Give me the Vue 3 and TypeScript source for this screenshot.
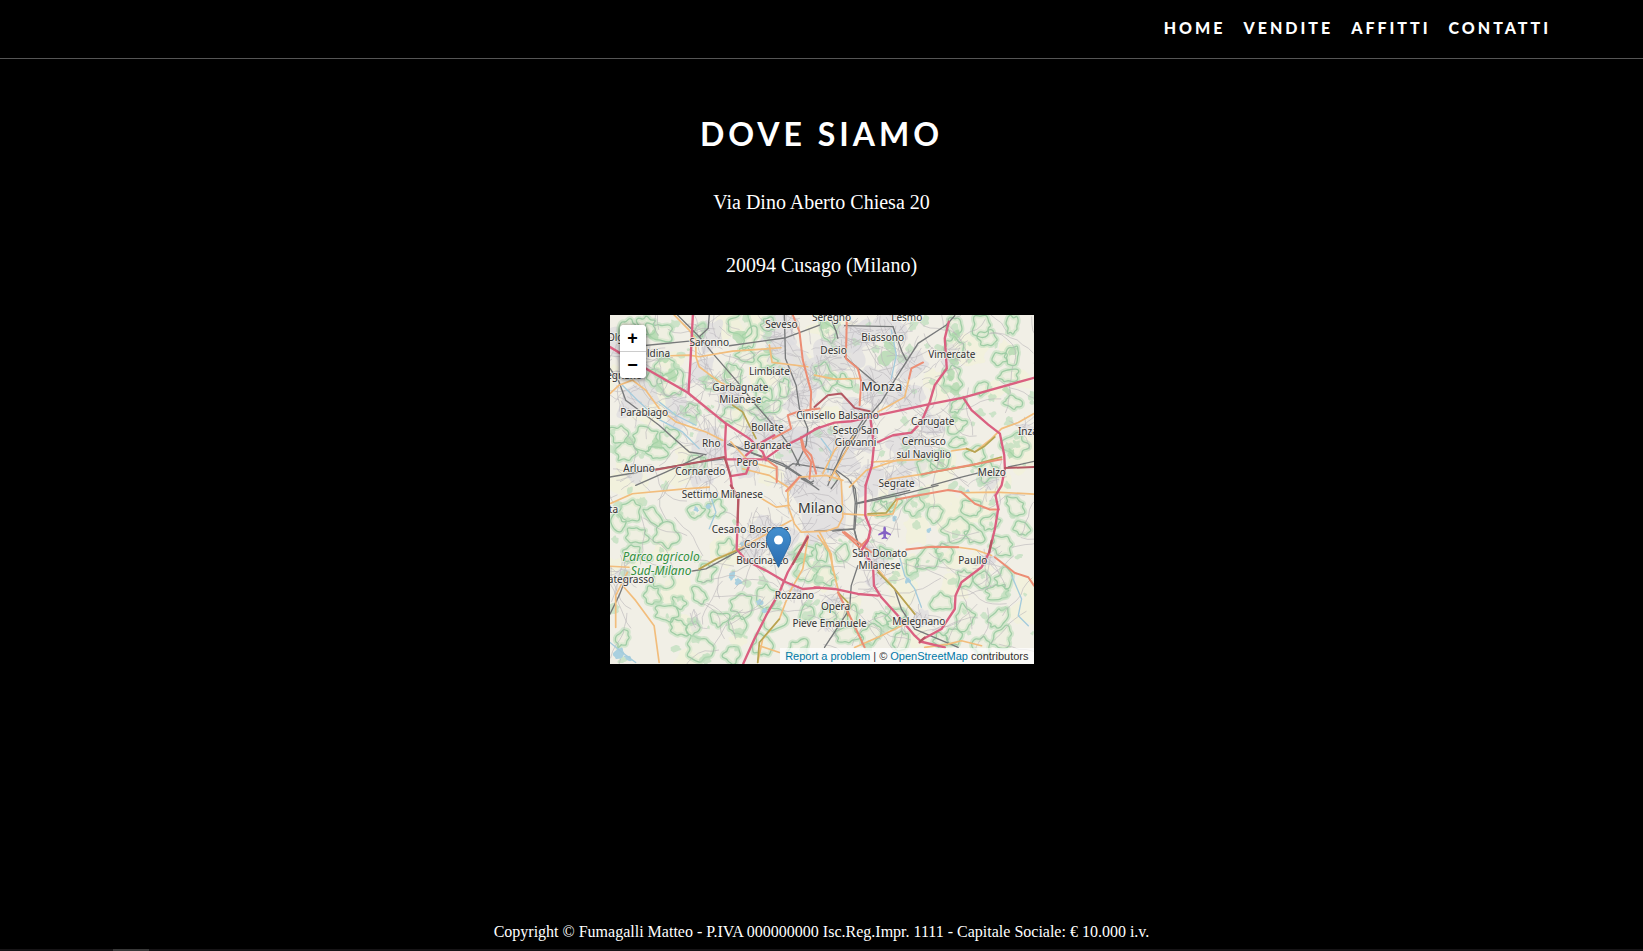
<script setup lang="ts">
type Tile = 'nw' | 'ne' | 'sw' | 'se' | 'mid'
type Road = [Tile, string]
type Place = [string, number, number, number?]

const navLinks = ['Home', 'Vendite', 'Affitti', 'Contatti']

// Map geometry is kept in overlapping survey tiles, three units to a map pixel.
const origin: Record<Tile, string> = {
  nw: 'translate(-33 -30)',
  ne: 'translate(612 -30)',
  sw: 'translate(-33 510)',
  se: 'translate(612 510)',
  mid: 'translate(327 315)',
}

const rails: Road[] = [
  ['nw', 'M225 20L300 95L345 150L410 225L470 300L540 380L570 420L600 480'],
  ['nw', 'M130 122L270 108M390 122L560 98L640 68L660 60'],
  ['nw', 'M555 30L558 160L590 240L600 310L625 370L620 420L590 480'],
  ['nw', 'M33 190L60 230L80 285L180 360L270 440L320 448'],
  ['nw', 'M110 540L200 500L310 450M300 95L327 70L330 30'],
  ['nw', 'M385 418L480 450L550 475L640 535M33 515L120 500L300 470L380 460'],
  ['ne', 'M420 32L395 60L310 115L240 225L200 290L165 330L130 380L60 490L40 540'],
  ['ne', 'M90 62L235 65M90 155L185 235M45 30L65 80L70 100'],
  ['ne', 'M235 65L262 140L275 165M350 540L440 515L500 500M580 485L657 468'],
  ['se', 'M125 55L250 30L370 0M115 0L122 50L118 130L0 137'],
  ['se', 'M185 250L240 310L260 370L300 430L430 485M118 130L135 195M130 240L110 300L105 370L30 485'],
  ['sw', 'M275 257L320 250L420 195L470 170M33 385L60 330L80 280'],
  ['mid', 'M30 70L200 140L238 165L298 208M245 175L270 188L282 182'],
  ['mid', 'M200 145L220 130L350 150L385 175L407 205L412 250L406 325L340 332'],
  ['mid', 'M430 0L370 90L345 150L360 170L335 205M350 150L330 172'],
  ['mid', 'M412 248L570 210M405 330L420 390'],
]

const yellows: Road[] = [
  ['nw', 'M33 265L60 240L100 225L140 255L180 310L230 350L320 380L370 405'],
  ['nw', 'M215 152L270 150L300 155L400 138L490 132L545 128'],
  ['nw', 'M225 30L270 75L290 105L290 155L300 185L360 230L400 250'],
  ['nw', 'M510 120L518 172L625 185M395 410L450 470L530 490'],
  ['ne', 'M190 320L230 298L270 275L283 220M0 210L60 222L135 220'],
  ['ne', 'M170 470L320 462M410 437L455 430L480 440L530 400L560 370L610 352L657 325'],
  ['ne', 'M200 535L230 520L320 507'],
  ['sw', 'M33 55L100 25L240 12L330 5M75 305L110 345L165 420L180 530'],
  ['sw', 'M33 242L90 245M50 425L50 330L85 260M300 250L350 220L420 190L575 105'],
  ['sw', 'M625 160L610 250L570 320L540 400L490 460L475 530M480 480L540 500'],
  ['se', 'M440 22L540 20L657 26M430 185L480 192L530 210'],
  ['se', 'M10 150L45 200L65 290L75 330M120 485L200 450L280 410'],
  ['se', 'M180 240L240 310L300 385M330 485L400 475L440 465L500 480'],
  ['mid', 'M240 170L205 215L207 260L225 310L245 335L320 332L355 320L370 290L365 180L345 155'],
  ['mid', 'M240 170L320 165L370 180M370 280L470 285L520 280L535 235'],
  ['mid', 'M390 200L440 150L560 110M70 145L150 165L205 200M310 160L345 90L370 60'],
  ['mid', 'M330 180L380 90L400 50M300 335L335 400L340 450M120 230L170 260L210 255'],
]

const oranges: Road[] = [
  ['nw', 'M580 30L600 80L610 165L635 260L633 310'],
  ['nw', 'M660 310L600 318L565 330L575 370L520 400M604 398L610 430L635 470L630 520'],
  ['ne', 'M97 30L94 160L130 190L140 230L135 300M325 172L290 190L283 220'],
  ['ne', 'M320 507L420 488L560 462'],
  ['se', 'M245 42L300 32L400 14L440 20L480 55L525 72L552 72M275 192L350 184L430 185'],
  ['se', 'M540 215L600 262L640 275L657 300M90 140L130 170L170 200M70 320L110 400L150 485'],
  ['mid', 'M245 50L255 85L275 105L290 160M172 185L172 140L130 110M200 212L240 170'],
  ['mid', 'M370 335L420 380L450 350M265 345L220 430'],
]

const olives: Road[] = [
  ['nw', 'M400 300L430 320L450 360L470 400'],
  ['ne', 'M455 430L480 440L510 422L540 395M330 505L400 492L470 480L560 455'],
  ['se', 'M190 260L240 310L300 385M75 325L100 350L100 390M160 85L215 82L245 42'],
  ['sw', 'M475 530L480 470L540 400M300 250L350 222L420 192'],
]

const motorways: Road[] = [
  ['nw', 'M33 126L140 190L265 262L380 355L450 400L490 440L500 465'],
  ['nw', 'M281 30L274 165L268 262M380 355L377 420L380 465L394 515L398 545L417 580'],
  ['nw', 'M380 462L430 462L495 462L540 430L604 398L660 365M440 450L480 415L525 390'],
  ['nw', 'M394 512L440 505L450 480'],
  ['ne', 'M0 372L60 352L110 348L190 330L330 300L445 277L657 218'],
  ['ne', 'M402 50L390 100L396 190L360 240L345 290L320 350L290 382L235 390L190 410'],
  ['ne', 'M445 277L470 315L520 358L555 385L568 450L570 490L560 540L542 570'],
  ['ne', 'M168 345L178 420L172 480L153 540'],
  ['sw', 'M395 0L417 40L415 110L412 190L440 225L500 255L560 290L610 310L660 306'],
  ['sw', 'M625 155L600 200L565 260L540 320L500 390L465 460L432 533'],
  ['se', 'M153 0L152 90L168 130L160 165L140 195L175 235L178 300L200 335L250 390L300 450L320 468L390 485'],
  ['se', 'M0 305L60 310L130 325L190 330'],
  ['se', 'M542 30L550 70L540 130L523 200L500 245L440 290L422 330L420 370L380 430L325 460L315 470'],
]

const tunnels: Road[] = [
  ['ne', 'M0 305L40 270L80 265L120 308L165 318M570 488L657 485'],
  ['sw', 'M395 0L417 40L415 110M625 155L600 200L580 235'],
  ['nw', 'M170 493L300 470L375 455L394 512'],
  ['se', 'M523 200L530 165M315 468L330 455'],
]

const rivers: Road[] = [
  ['nw', 'M70 240L120 290L175 340L250 380L300 430M180 290L230 330L290 360'],
  ['se', 'M255 215L270 270L300 310L320 365M590 270L620 340L610 390L640 420'],
  ['ne', 'M230 75L245 150L230 220M20 400L50 440L40 500'],
  ['sw', 'M330 20L350 80L330 130M33 470L70 500L110 530'],
]

const lakes = [
  [86, 194, 3], [98, 191, 3], [122, 260, 5], [128, 266, 4], [150, 287, 4], [154, 295, 3],
  [9, 337, 6], [18, 342, 4], [318, 215, 3], [297, 265, 3], [284, 203, 3], [357, 176, 2], [132, 229, 3],
]

const parks = [
  [17, 13, 9], [49, 17, 14], [36, 10, 9], [56, 53, 12], [45, 63, 9], [62, 67, 13], [132, 10, 13],
  [139, 23, 11], [135, 40, 10], [159, 10, 8], [122, 60, 13], [152, 77, 12], [159, 90, 11], [100, 68, 9],
  [122, 100, 11], [148, 97, 9], [9, 120, 10], [36, 123, 13], [59, 123, 10], [46, 137, 10], [16, 137, 11],
  [86, 147, 9], [174, 73, 9], [89, 16, 8], [157, 47, 10], [82, 95, 8], [217, 17, 11], [214, 60, 14],
  [234, 67, 9], [344, 10, 10], [344, 33, 11], [341, 63, 12], [371, 10, 11], [377, 24, 10], [401, 10, 9],
  [401, 40, 10], [397, 60, 11], [401, 87, 9], [371, 73, 8], [347, 90, 9], [347, 110, 10], [347, 127, 8],
  [389, 43, 9], [364, 140, 10], [331, 143, 11], [314, 153, 9], [404, 130, 13], [377, 157, 11],
  [19, 197, 12], [42, 200, 11], [56, 220, 12], [86, 197, 9], [106, 193, 9], [26, 220, 11], [9, 207, 9],
  [22, 237, 10], [52, 263, 12], [42, 280, 9], [56, 297, 11], [69, 313, 10], [69, 287, 8], [89, 280, 9],
  [96, 257, 11], [82, 313, 8], [89, 332, 13], [109, 303, 9], [126, 310, 10], [132, 290, 12],
  [116, 233, 9], [12, 323, 9], [156, 280, 12], [162, 303, 13], [192, 237, 11], [196, 257, 11],
  [196, 297, 10], [189, 333, 12], [122, 340, 9], [152, 330, 11], [271, 193, 9], [281, 188, 10],
  [304, 190, 12], [324, 197, 11], [344, 213, 14], [361, 193, 11], [364, 220, 10], [391, 230, 13],
  [380, 207, 9], [404, 190, 11], [411, 213, 9], [317, 243, 14], [334, 237, 9], [301, 250, 9],
  [331, 287, 11], [354, 302, 13], [387, 303, 12], [391, 323, 12], [387, 277, 11], [354, 263, 9],
  [371, 263, 9], [241, 300, 10], [217, 300, 9], [237, 320, 13], [271, 303, 9], [284, 303, 11],
  [211, 237, 9], [214, 260, 11], [231, 237, 9], [274, 237, 8], [394, 263, 10], [344, 320, 10],
  [260, 320, 11], [290, 325, 10], [370, 330, 11], [330, 325, 8],
]

const woods = [
  [277, 42, 11], [279, 28, 7], [344, 74, 7], [340, 60, 6], [345, 20, 5], [153, 74, 6], [160, 54, 5],
  [62, 60, 7], [130, 22, 7], [190, 242, 8], [281, 190, 5], [48, 128, 6], [401, 36, 5], [218, 62, 6],
  [54, 42, 6], [44, 20, 5], [158, 36, 5], [344, 46, 5], [20, 125, 5], [118, 58, 5], [344, 103, 5],
  [396, 75, 5], [400, 138, 5], [92, 145, 4], [215, 10, 5], [330, 147, 5],
]

const suburbs = [
  [208, 185, 50], [215, 138, 36], [180, 128, 26], [245, 110, 30], [270, 72, 22], [180, 45, 30],
  [230, 35, 24], [170, 15, 20], [100, 22, 18], [20, 38, 26], [30, 80, 26], [70, 98, 20], [100, 128, 20],
  [135, 145, 18], [150, 110, 20], [252, 20, 20], [280, 15, 18], [340, 40, 12], [320, 108, 15],
  [300, 135, 22], [290, 165, 20], [260, 165, 20], [170, 225, 22], [150, 215, 16], [140, 235, 15],
  [265, 240, 13], [185, 275, 9], [225, 285, 9], [310, 303, 12], [12, 260, 10], [378, 165, 12],
  [375, 245, 9], [25, 158, 9], [90, 160, 12], [85, 310, 7], [215, 308, 8], [265, 265, 10], [418, 115, 9],
  [90, 55, 18], [120, 82, 16], [190, 85, 20], [300, 50, 18], [300, 85, 16], [205, 60, 18],
]

const places: Place[] = [
  ['Seveso', 171, 13], ['Seregno', 221, 6], ['Lesmo', 296, 6],
  ['Saronno', 99, 31], ['Biassono', 272, 26], ['Desio', 223, 39], ['Vimercate', 341, 43],
  ['Limbiate', 159, 60], ['Garbagnate', 130, 76], ['Milanese', 130, 88], ['Monza', 271, 76, 13],
  ['Parabiago', 34, 101], ['Cinisello Balsamo', 227, 104], ['Carugate', 322, 110],
  ['Bollate', 157, 116], ['Sesto San', 245, 119], ['Giovanni', 245, 131], ['Cernusco', 313, 130],
  ['sul Naviglio', 313, 143], ['Rho', 101, 132], ['Baranzate', 157, 134], ['Pero', 137, 151],
  ['Arluno', 29, 157], ['Cornaredo', 90, 160], ['Melzo', 381, 161], ['Segrate', 286, 172],
  ['Settimo Milanese', 112, 183], ['Milano', 210, 198, 14], ['Cesano Boscone', 140, 217],
  ['Corsico', 151, 232], ['Buccinasco', 152, 248], ['San Donato', 269, 241], ['Milanese', 269, 253],
  ['Paullo', 362, 248], ['Rozzano', 184, 283], ['Opera', 225, 294], ['Pieve Emanuele', 219, 311],
  ['Melegnano', 308, 309],
]

const endAnchored: Place[] = [
  ['Olgi', 16, 26], ['ldina', 60, 42], ['Legnano', 32, 64], ['Abbiategrasso', 44, 267], ['Magenta', 8, 198],
]

let seed = 47
function random(): number {
  seed = (seed * 16807) % 2147483647
  return seed / 2147483647
}

function blob([cx, cy, r]: number[]): string {
  const steps = 16
  const tilt = random() * Math.PI
  const squash = 0.6 + random() * 0.4
  const ring = Array.from({ length: steps }, (_, i) => {
    const angle = (i / steps) * Math.PI * 2
    const reach = r * (0.6 + random() * 0.7)
    const u = Math.cos(angle) * reach
    const v = Math.sin(angle) * reach * squash
    return [cx + u * Math.cos(tilt) - v * Math.sin(tilt), cy + u * Math.sin(tilt) + v * Math.cos(tilt)]
  })
  const middle = (i: number) => {
    const a = ring[i % steps]
    const b = ring[(i + 1) % steps]
    return `${((a[0] + b[0]) / 2).toFixed(1)} ${((a[1] + b[1]) / 2).toFixed(1)}`
  }
  let d = `M${middle(0)}`
  for (let i = 1; i <= steps; i++) {
    const p = ring[i % steps]
    d += `Q${p[0].toFixed(1)} ${p[1].toFixed(1)} ${middle(i)}`
  }
  return d + 'Z'
}

function lane(x: number, y: number, steps: number, stride: number): string {
  let heading = random() * Math.PI * 2
  let d = `M${x.toFixed(1)} ${y.toFixed(1)}`
  for (let i = 0; i < steps; i++) {
    heading += (random() - 0.5) * 0.9
    x += Math.cos(heading) * stride
    y += Math.sin(heading) * stride
    d += `L${x.toFixed(1)} ${y.toFixed(1)}`
  }
  return d
}

const fields = Array.from({ length: 60 }, () => blob([random() * 423, random() * 348, 8 + random() * 14])).join('')
const suburbShapes = suburbs.map(blob)
const parkShapes = parks.map(blob).join('')
const groves = Array.from({ length: 190 }, () => blob([random() * 423, random() * 348, 2 + random() * 4])).join('')
const woodShapes = woods.map(blob)
const lakeShapes = lakes.map(blob)
const countryLanes = Array.from({ length: 190 }, () => lane(random() * 423, random() * 348, 7, 7)).join('')
const streets = suburbs
  .flatMap(([cx, cy, r]) =>
    Array.from({ length: Math.round(r * 0.9) }, () =>
      lane(cx + (random() - 0.5) * r * 1.7, cy + (random() - 0.5) * r * 1.7, 4, 4),
    ),
  )
  .join('')

const roadLayers = [
  { name: 'river', roads: rivers },
  { name: 'rail', roads: rails },
  { name: 'yellow', roads: yellows },
  { name: 'olive', roads: olives },
  { name: 'orange', roads: oranges },
  { name: 'motorway', roads: motorways },
  { name: 'tunnel', roads: tunnels },
]
</script>

<template>
  <div class="page">
    <header class="topbar">
      <nav class="nav">
        <a v-for="link in navLinks" :key="link" href="#">{{ link }}</a>
      </nav>
    </header>

    <main class="content">
      <h1>Dove siamo</h1>
      <p>Via Dino Aberto Chiesa 20</p>
      <p>20094 Cusago (Milano)</p>

      <section class="map" aria-label="Milano">
        <svg class="map-canvas" viewBox="0 0 423 348">
          <path class="field" :d="fields" />
          <path v-for="(d, i) in suburbShapes" :key="'s' + i" class="suburb" :d="d" />
          <path class="park-glow" :d="parkShapes" />
          <path class="park" :d="parkShapes" />
          <path class="grove" :d="groves" />
          <path v-for="(d, i) in woodShapes" :key="'w' + i" class="wood" :d="d" />
          <path v-for="(d, i) in lakeShapes" :key="'l' + i" class="lake" :d="d" />
          <path class="lane" :d="countryLanes" />
          <path class="street" :d="streets" />
          <g transform="scale(0.33333)">
            <g v-for="layer in roadLayers" :key="layer.name" :class="['road', layer.name]">
              <path v-for="([tile, d], i) in layer.roads" :key="i" :transform="origin[tile]" :d="d" />
            </g>
          </g>
          <path
            class="plane"
            d="M274 211q1.300 0 1.300 2v2.500l5 3v1.500l-5-1.500v3l1.700 1.200v1l-3-.7-3 .7v-1l1.700-1.200v-3l-5 1.500v-1.500l5-3v-2.500q0-2 1.300-2z"
          />
          <g class="places">
            <text v-for="([name, x, y, size], i) in places" :key="i" :x="x" :y="y" :font-size="size ?? 10">{{ name }}</text>
          </g>
          <g class="places ends">
            <text v-for="([name, x, y]) in endAnchored" :key="name" :x="x" :y="y" font-size="10">{{ name }}</text>
          </g>
          <g class="places starts">
            <text x="407" y="120" font-size="10">Inzago</text>
          </g>
          <g class="places reserve">
            <text x="51" y="245" font-size="12">Parco agricolo</text>
            <text x="51" y="259" font-size="12">Sud-Milano</text>
          </g>
        </svg>

        <svg class="marker" viewBox="0 0 25 41">
          <defs>
            <linearGradient id="pin" x1="0" y1="0" x2="0" y2="1">
              <stop offset="0" stop-color="#4490cf" />
              <stop offset="1" stop-color="#2a6cb0" />
            </linearGradient>
          </defs>
          <path
            d="M12.500 .5C5.900 .5 .5 5.900 .5 12.500c0 2.600 1 5 2.100 7.300L12.500 40.300l9.900-20.500c1.100-2.300 2.100-4.700 2.100-7.300C24.500 5.900 19.100 .5 12.500 .5z"
            fill="url(#pin)"
            stroke="#2e6da5"
          />
          <circle cx="12.500" cy="13" r="4.500" fill="#fff" />
        </svg>

        <div class="zoom">
          <button type="button" aria-label="Zoom in">+</button>
          <button type="button" aria-label="Zoom out">−</button>
        </div>

        <div class="attribution">
          <a href="#">Report a problem</a> | © <a href="#">OpenStreetMap</a> contributors
        </div>
      </section>
    </main>

    <footer class="footer">
      Copyright © Fumagalli Matteo - P.IVA 000000000 Isc.Reg.Impr. 1111 - Capitale Sociale: € 10.000 i.v.
    </footer>
    <div class="strip"><span></span></div>
  </div>
</template>

<style>
body {
  margin: 0;
  background: #000;
}
</style>

<style scoped>
.page {
  display: flex;
  flex-direction: column;
  min-height: 100vh;
  background: #000;
  color: #fff;
  font-family: "Liberation Serif", serif;
}

.topbar {
  display: flex;
  justify-content: flex-end;
  padding: 16px 92px 18px 16px;
  border-bottom: 1px solid #555;
}

.nav {
  display: flex;
  gap: 18px;
}

.nav a {
  color: #fff;
  font: 900 16px/24px Lato, sans-serif;
  letter-spacing: 3px;
  text-decoration: none;
  text-transform: uppercase;
}

.content {
  display: flex;
  flex-direction: column;
  align-items: center;
  padding-top: 56px;
}

h1 {
  margin: 0 0 35px;
  font: 700 32px/38px Lato, sans-serif;
  letter-spacing: 4px;
  text-transform: uppercase;
}

p {
  margin: 0 0 35px;
  font-size: 20px;
  line-height: 28px;
}

.map {
  position: relative;
  width: 424px;
  max-width: 100%;
  overflow: hidden;
  margin-top: 1px;
  background: #f1efe6;
}

.map-canvas {
  display: block;
  width: 100%;
}

.field { fill: #f2f2d8; opacity: 0.7; }
.suburb { fill: #dddcdf; opacity: 0.75; }
.park-glow { fill: none; stroke: #c3e0c0; stroke-width: 5; opacity: 0.65; }
.park { fill: #eef0dc; fill-opacity: 0.5; stroke: #93c79c; stroke-width: 1.3; opacity: 0.8; }
.grove { fill: #b9dcb8; opacity: 0.65; }
.wood { fill: #a9d5a8; opacity: 0.7; }
.lake { fill: #a9d0df; }
.lane { fill: none; stroke: #b9b6b9; stroke-width: 0.6; }
.street { fill: none; stroke: #bdbbc0; stroke-width: 0.6; }

.road { fill: none; stroke-linecap: round; stroke-linejoin: round; }
.river { stroke: #a4cbdc; stroke-width: 4; }
.rail { stroke: #77797a; stroke-width: 4; }
.yellow { stroke: #f2bd7c; stroke-width: 5; }
.olive { stroke: #b5a452; stroke-width: 5; }
.orange { stroke: #ec8d74; stroke-width: 6; }
.motorway { stroke: #da6080; stroke-width: 7; }
.tunnel { stroke: #b45862; stroke-width: 6; }

.plane { fill: #8461c4; }

.places {
  fill: #333;
  stroke: #f5f4f0;
  stroke-width: 2px;
  stroke-linejoin: round;
  stroke-opacity: 0.75;
  paint-order: stroke;
  font-family: "Noto Sans", sans-serif;
  text-anchor: middle;
}

.ends { text-anchor: end; }
.starts { text-anchor: start; }
.reserve { fill: #32903c; font-style: italic; }

.marker {
  position: absolute;
  left: 156px;
  top: 212px;
  width: 25px;
  height: 41px;
}

.zoom {
  position: absolute;
  left: 10px;
  top: 10px;
  display: flex;
  flex-direction: column;
  border-radius: 4px;
  overflow: hidden;
  background: #fff;
  box-shadow: 0 1px 5px rgba(0, 0, 0, 0.65);
}

.zoom button {
  width: 26px;
  height: 26px;
  padding: 0;
  border: 0;
  background: #fff;
  color: #000;
  font: bold 18px/26px "Liberation Sans", sans-serif;
}

.zoom button + button {
  height: 27px;
  border-top: 1px solid #ccc;
}

.attribution {
  position: absolute;
  right: 0;
  bottom: 0;
  padding: 0 5px;
  background: rgba(255, 255, 255, 0.7);
  color: #333;
  font: 11px/16px "Liberation Sans", sans-serif;
  white-space: nowrap;
}

.attribution a {
  color: #0078a8;
  text-decoration: none;
}

.footer {
  margin-top: auto;
  padding: 16px 16px 7px;
  font-size: 16px;
  line-height: 20px;
  text-align: center;
}

.strip {
  display: flex;
  height: 2px;
  background: #161416;
}

.strip span {
  width: 36px;
  margin-left: 113px;
  background: #383838;
}
</style>
